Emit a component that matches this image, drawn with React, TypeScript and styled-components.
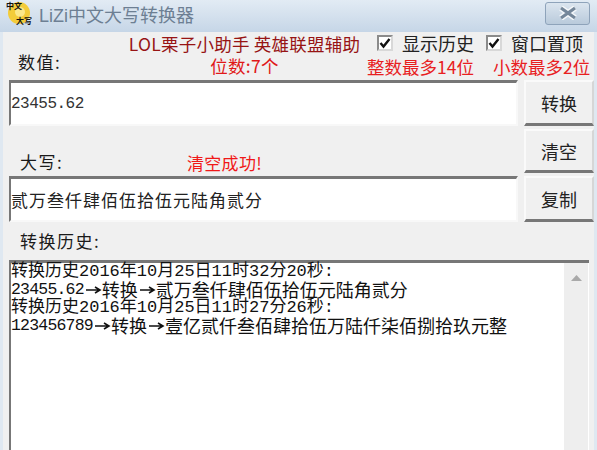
import React from 'react'
import styled, {createGlobalStyle} from 'styled-components'

const Global = createGlobalStyle`
    html, body {
        margin: 0;
        padding: 0;
        background: #fff;
    }
`

const CJK = `"Noto Sans CJK SC", "Liberation Sans", sans-serif`
const MONO = `"Liberation Mono", "Noto Sans CJK SC", monospace`

const Win = styled.div`
    width: 597px;
    height: 450px;
    overflow: hidden;
    display: flex;
    flex-direction: column;
    background: linear-gradient(#e2ebf4, #c6d6e7 32px, #dfe8f1 32px);
    font-family: ${CJK};
    color: #1a1a1a;
`

const TitleBar = styled.div`
    height: 32px;
    flex: none;
    display: flex;
    align-items: center;
    padding: 0 7px 0 6px;
    box-sizing: border-box;
`

const TitleText = styled.div`
    margin-left: 7px;
    font-size: 18px;
    color: #6d7f93;
    margin-top: -5px;
    font-family: "Liberation Sans", ${CJK};
`

const Logo = styled.svg`
    width: 26px;
    height: 26px;
    flex: none;
    margin-top: -6px;
`

const CloseBtn = styled.div`
    margin-left: auto;
    margin-top: -6px;
    width: 45px;
    height: 23px;
    box-sizing: border-box;
    border: 1px solid #8ea3ba;
    border-radius: 3px;
    background: linear-gradient(#dbe5ef, #b9cadb);
    display: flex;
    align-items: center;
    justify-content: center;
`

const Client = styled.div`
    flex: 1;
    min-height: 0;
    margin: 0 3px;
    padding: 0 0 0 6px;
    background: #f0f0f0;
    display: grid;
    grid-template-columns: 509px 70px;
    grid-template-rows: 48px 46px 50px 46px 38px 1fr;
    column-gap: 6px;
`

const Top = styled.div`
    grid-column: 1 / 3;
    display: flex;
`

const FieldLabel = styled.div<{$indent?: number}>`
    font-size: 17px;
    letter-spacing: 1.5px;
    line-height: 20px;
    padding-left: ${p => p.$indent ?? 9}px;
    white-space: nowrap;
`

const TopLabel = styled(FieldLabel)`
    width: 119px;
    box-sizing: border-box;
    padding-top: 20px;
`

const Promo = styled.div`
    width: 233px;
    flex: none;
    display: flex;
    flex-direction: column;
    align-items: center;
    padding-top: 1px;
    white-space: nowrap;
`

const PromoLine = styled.div<{$bright?: boolean}>`
    font-size: 17.5px;
    line-height: 22px;
    letter-spacing: 0.25px;
    color: ${p => p.$bright ? '#e01818' : '#971414'};
`

const Options = styled.div`
    margin-left: 6px;
    width: 225px;
    flex: none;
    display: grid;
    grid-template-columns: 109px 116px;
    grid-template-rows: 21px 27px;
`

const Option = styled.label`
    display: flex;
    align-items: center;
    gap: 9px;
    padding: 0 0 0 10px;
    font-size: 18px;
    color: #222;
    white-space: nowrap;
`

const Box = styled.span`
    width: 16px;
    height: 16px;
    box-sizing: border-box;
    flex: none;
    background: #fff;
    border: 2px solid;
    border-color: #8b8b8b #d8d8d8 #d8d8d8 #8b8b8b;
    display: flex;
    align-items: center;
    justify-content: center;
`

const Limit = styled.div<{$indent?: number}>`
    font-size: 17.5px;
    line-height: 27px;
    color: #e8201f;
    white-space: nowrap;
    margin-left: ${p => p.$indent ?? 0}px;
`

const Field = styled.div`
    background: #fff;
    box-sizing: border-box;
    border-top: 3px solid #777;
    border-left: 2px solid #777;
    border-right: 2px solid #f8f8f8;
    border-bottom: 2px solid #f8f8f8;
    display: flex;
    align-items: center;
    white-space: nowrap;
`

const NumberText = styled.div`
    font-family: ${MONO};
    font-size: 16px;
    letter-spacing: -0.5px;
    color: #333;
`

const WordsText = styled.div`
    font-size: 17px;
    letter-spacing: 1px;
    color: #222;
`

const Btn = styled.div`
    box-sizing: border-box;
    background: #f0f0f0;
    border-top: 2px solid #fafafa;
    border-left: 2px solid #fafafa;
    border-right: 2px solid #d6d6d6;
    border-bottom: 3px solid #777;
    display: flex;
    align-items: center;
    justify-content: center;
    font-size: 18px;
    color: #222;
`

const MiddleLabel = styled.div`
    display: flex;
    align-items: flex-end;
    padding-bottom: 3px;
`

const WordsLabel = styled(FieldLabel)`
    width: 178px;
    box-sizing: border-box;
    padding-bottom: 1px;
`

const Status = styled.div`
    font-size: 17px;
    line-height: 20px;
    letter-spacing: 0.3px;
    color: #f01818;
    white-space: nowrap;
`

const MidBtn = styled(Btn)`
    margin: 3px 0;
`

const HistoryLabel = styled.div`
    grid-column: 1 / 3;
    display: flex;
    align-items: center;
`

const History = styled.div`
    grid-column: 1 / 3;
    margin-right: 5px;
    display: flex;
    background: #fff;
    border-top: 3px solid #777;
    border-left: 2px solid #777;
    min-height: 0;
`

const Log = styled.div`
    flex: 1;
    color: #111;
    white-space: nowrap;
`

const StampLine = styled.div`
    height: 17px;
    line-height: 17px;
    font-size: 17px;
    font-family: ${MONO};
`

const ValueLine = styled.div`
    height: 19px;
    line-height: 19px;
    font-size: 18px;
    display: flex;
    align-items: center;
`

const ValueNumber = styled.span`
    font-family: ${MONO};
    font-size: 16.5px;
    letter-spacing: -0.8px;
`

const Arrow = styled.svg`
    width: 18px;
    height: 10px;
    flex: none;
`

const ScrollBar = styled.div`
    width: 24px;
    flex: none;
    background: #eeeeee;
    margin-right: 1px;
    display: flex;
    justify-content: center;
    padding-top: 12px;
    box-sizing: border-box;
`

type HistoryEntry = {stamp: string, value: string, words: string}

const entries: HistoryEntry[] = [
    {stamp: '转换历史2016年10月25日11时32分20秒:', value: '23455.62', words: '贰万叁仟肆佰伍拾伍元陆角贰分'},
    {stamp: '转换历史2016年10月25日11时27分26秒:', value: '123456789', words: '壹亿贰仟叁佰肆拾伍万陆仟柒佰捌拾玖元整'},
]

function Check() {
    return <Box>
        <svg width="12" height="12" viewBox="0 0 12 12">
            <path d="M1.5 6 L4.5 9.5 L10.5 2" fill="none" stroke="#111" strokeWidth="2.4" />
        </svg>
    </Box>
}

function RightArrow() {
    return <Arrow viewBox="0 0 18 10">
        <path d="M2 5 H15 M11 2 L16 5 L11 8" fill="none" stroke="#111" strokeWidth="1.6" />
    </Arrow>
}

export default function App() {
    return <Win>
        <Global />
        <TitleBar>
            <Logo viewBox="0 0 26 26">
                <circle cx="13" cy="13" r="11" fill="#f3cc3a" />
                <circle cx="14" cy="12" r="5" fill="#fbe88a" />
                <text x="0" y="9" fontSize="8" fontWeight="700" fill="#111">中文</text>
                <text x="10" y="24" fontSize="8" fontWeight="700" fill="#111">大写</text>
            </Logo>
            <TitleText>LiZi中文大写转换器</TitleText>
            <CloseBtn>
                <svg width="22" height="14" viewBox="0 0 22 14">
                    <path d="M4 2 L18 12 M18 2 L4 12" stroke="#f4f7fa" strokeWidth="6" />
                    <path d="M4 2 L18 12 M18 2 L4 12" stroke="#75879a" strokeWidth="3.2" />
                </svg>
            </CloseBtn>
        </TitleBar>
        <Client>
            <Top>
                <TopLabel>数值:</TopLabel>
                <Promo>
                    <PromoLine>LOL栗子小助手 英雄联盟辅助</PromoLine>
                    <PromoLine $bright>位数:7个</PromoLine>
                </Promo>
                <Options>
                    <Option><Check />显示历史</Option>
                    <Option><Check />窗口置顶</Option>
                    <Limit>整数最多14位</Limit>
                    <Limit $indent={17}>小数最多2位</Limit>
                </Options>
            </Top>
            <Field><NumberText>23455.62</NumberText></Field>
            <Btn>转换</Btn>
            <MiddleLabel>
                <WordsLabel $indent={11}>大写:</WordsLabel>
                <Status>清空成功!</Status>
            </MiddleLabel>
            <MidBtn>清空</MidBtn>
            <Field><WordsText>贰万叁仟肆佰伍拾伍元陆角贰分</WordsText></Field>
            <Btn>复制</Btn>
            <HistoryLabel><FieldLabel $indent={11}>转换历史:</FieldLabel></HistoryLabel>
            <History>
                <Log>
                    {entries.map(entry => <div key={entry.stamp}>
                        <StampLine>{entry.stamp}</StampLine>
                        <ValueLine>
                            <ValueNumber>{entry.value}</ValueNumber>
                            <RightArrow />转换<RightArrow />{entry.words}
                        </ValueLine>
                    </div>)}
                </Log>
                <ScrollBar>
                    <svg width="11" height="6" viewBox="0 0 11 6"><path d="M5.5 0 L11 6 L0 6 Z" fill="#a9a9a9" /></svg>
                </ScrollBar>
            </History>
        </Client>
    </Win>
}
